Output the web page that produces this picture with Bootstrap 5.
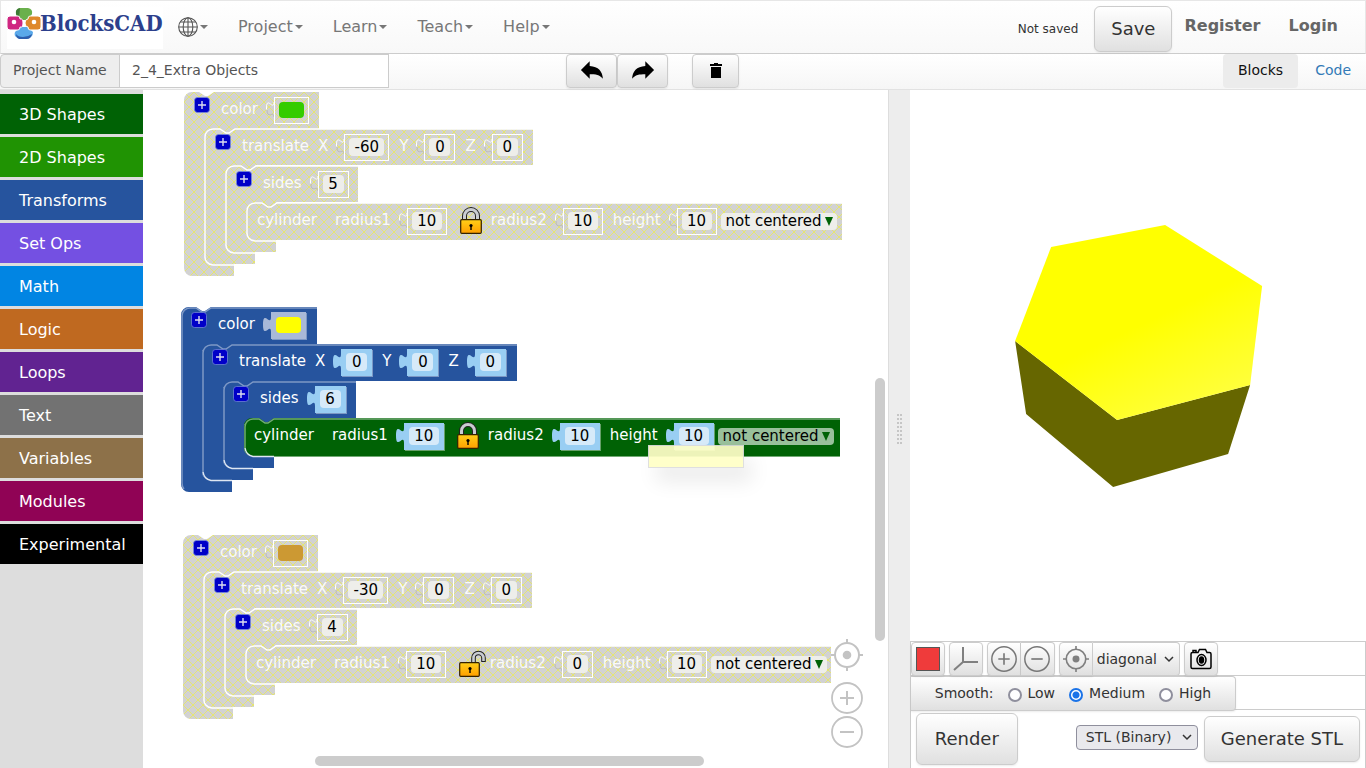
<!DOCTYPE html>
<html lang="en">
<head>
<meta charset="utf-8">
<meta name="viewport" content="width=device-width, initial-scale=1">
<title>BlocksCAD</title>
<link href="https://cdn.jsdelivr.net/npm/bootstrap@5.3.0/dist/css/bootstrap.min.css" rel="stylesheet">
<style>
body{font-family:"DejaVu Sans",sans-serif;font-size:14px;line-height:20px;color:#333}
a{text-decoration:none}
.topbar{height:54px;padding:0 27px 0 6px;border:1px solid #e7e7e7;border-bottom-color:#ccc;background:linear-gradient(#fff,#f8f8f8);flex-wrap:nowrap;justify-content:flex-start}
.brand{width:156px;height:42px;background:#fff;margin-top:2px}
.topbar .nav-link{font-size:16px;color:#777;padding:0 15px;white-space:nowrap;display:flex;align-items:center}
.topbar .dropdown-toggle::after{margin-left:2px;vertical-align:0;border-top:4px solid;border-right:4px solid transparent;border-left:4px solid transparent}
.status{font-size:12px}
.account{font-size:16px;font-weight:700;color:#666;padding-bottom:2px}
.btn-grad{--bs-btn-padding-x:0;--bs-btn-padding-y:0;border:1px solid #ccc;border-radius:4px;background:linear-gradient(#fff,#e0e0e0);color:#333;box-shadow:0 1px 2px rgba(0,0,0,.08);display:flex;align-items:center;justify-content:center}
.btn-big{font-size:18px;line-height:24px;border-radius:6px;padding:10px 16px}
.btn-render{padding:13px 18px}
.subbar{height:36px;background:linear-gradient(#fff,#f6f6f6);border-bottom:1px solid #e2e2e2}
.namegroup{width:389px;height:34px}
.namegroup .input-group-text{width:120px;font-size:14px;line-height:20px;background:#eee;color:#555;border-color:#ccc;padding:0 12px 2px;height:34px;border-radius:4px 0 0 4px}
.namegroup .form-control{font-size:14px;color:#555;border-color:#ccc;border-radius:0;padding:0 12px 2px;height:34px}
.edits{margin-left:177px}
.edit-btn{width:51px;height:34px}
.edit-del{width:47px}
.mode{gap:2px}
.mode .nav-link{height:34px;padding:6px 15px;color:#337ab7;border-radius:4px}
.mode .nav-link.active{background:#ececec;color:#111}
.toolbox{width:143px;background:#ddd;padding-top:4px;flex:none}
.toolbox a{height:40px;margin-bottom:3px;padding:9px 19px 7px;line-height:24px;font-size:16px;color:#fff;display:block}
.splitter{width:22px;background:#ededed;border-left:1px solid #ddd;flex:none}
.viewpane{width:33.4%;flex:none}
.side{border-left:1px solid #ccc}

/* block canvas */
.stack{position:absolute;width:660px;height:185px}
.stack-a{left:41px;top:2px}
.stack-b{left:38px;top:217px}
.stack-c{left:40px;top:445px}
.shape{position:absolute;left:0;top:0;overflow:visible}
.line{position:relative;height:37px;display:flex;align-items:center;padding-left:10px;font-size:15px;color:#fff;white-space:nowrap}
.line label,.line .word{display:block;line-height:18px;padding-bottom:2px}
.l1{margin-left:21px}.l2{margin-left:42px}.l3{margin-left:63px}
.l1 .word{margin-right:9px}
.l3 .word{margin-right:18px}
.more{width:16px;height:16px;align-self:flex-start;margin:5px 11px 0 0;padding:0;border:0;background:none;display:flex}
.socket{display:flex;height:27px;color:#99cef3;margin:0 10px 0 8px}
.socket svg{display:block}
.hole{background:currentColor;height:27px;padding:4px 5px;display:flex;align-items:center;box-shadow:1px 1px 0 rgba(255,255,255,.4)}
.numfield{width:21px;height:18px;border:0;border-radius:4px;padding:0;text-align:center;font-size:15px;line-height:18px;color:#000;background:#d6eaf9}
.w2{width:30px}.w3{width:35px}
.paint{color:#a8b9d8}
.swatch{width:25px;height:16px;border:0;border-radius:4px;padding:0;overflow:hidden;background:none;appearance:none;display:block}
.swatch::-webkit-color-swatch-wrapper{padding:0}
.swatch::-webkit-color-swatch{border:0}
.pick{display:flex;align-items:center;height:17px;border-radius:4px;background:#99c09b;padding:0 4px 0 5px;color:#000}
.pick select{appearance:none;border:0;background:none;padding:0;width:99px;font-size:15px;line-height:17px;color:#000}
.off .hole{background:none;border:1px solid #fff;padding:3px 4px;box-shadow:none}
.off .numfield,.off .pick{background:#eeeeea}
.off .socket{color:transparent}
.off .line{color:#fafafa}
.tip{position:absolute;left:505px;top:355px;width:96px;height:23px;background:#ffffc7;border:1px solid #ddd;opacity:.93;box-shadow:8px 14px 20px rgba(0,0,0,.08)}
.canvas-tools{position:absolute;right:25px;bottom:20px;width:32px;color:#c3c3c3}
.canvas-tools button{border:0;background:none;padding:0;display:block;color:inherit;margin-top:2px}
.canvas-tools button:first-child{margin-bottom:11px}
.scroll-v{position:absolute;right:3px;top:288px;width:10px;height:263px;border-radius:5px;background:#ccc}
.scroll-h{position:absolute;left:172px;bottom:2px;width:389px;height:10px;border-radius:5px;background:#ccc}

/* viewer controls */
.tool{width:34px;height:34px}
.viewsel{width:87px;height:34px;appearance:none;border:1px solid #ccc;border-left:0;border-radius:0 4px 4px 0;color:#333;padding:0 4px}
.chev{background-image:url("data:image/svg+xml,%3Csvg xmlns='http://www.w3.org/2000/svg' width='10' height='7'%3E%3Cpath d='M1 1L5 5 9 1' fill='none' stroke='%23333' stroke-width='1.500'/%3E%3C/svg%3E"),linear-gradient(#fff,#e0e0e0);background-repeat:no-repeat;background-position:right 5px center,0 0}
.fmt{appearance:none;width:122px;height:25px;border:1px solid #8f8f9d;border-radius:4px;color:#333;padding:0 9px;margin:0 6px 4px auto;background-color:#e9e9ed;background-position:right 5px center}
.fmt.chev{background-image:url("data:image/svg+xml,%3Csvg xmlns='http://www.w3.org/2000/svg' width='10' height='7'%3E%3Cpath d='M1 1L5 5 9 1' fill='none' stroke='%23333' stroke-width='1.500'/%3E%3C/svg%3E")}
.panel-row{height:34px;border-bottom:1px solid #ccc}
.smooth{width:325px;height:35px;justify-content:flex-start;padding:0 0 0 24px;border-left:0;border-radius:0 4px 4px 0}
.smooth span,.smooth label{padding-bottom:1px}
.smooth input{appearance:none;width:14px;height:14px;border:2px solid #8f8f9d;border-radius:50%;background:#fff;margin:3px 6px 0 14px}
.smooth input:checked{border-color:#1a73e8;background:radial-gradient(#1a73e8 0 3px,#fff 4px)}
.renderbar{height:58px;padding:0 5px}
</style>
</head>
<body class="vh-100 d-flex flex-column overflow-hidden bg-white">

<svg width="0" height="0" class="position-absolute" aria-hidden="true">
  <defs>
    <pattern id="hatch" width="10" height="10" patternUnits="userSpaceOnUse"><rect width="10" height="10" fill="#d2d2d2"/><path d="M0 0L10 10M10 0L0 10" stroke="#eeee44" stroke-width=".8" stroke-opacity=".85"/></pattern>
    <linearGradient id="gold" x2="0" y2="1"><stop stop-color="#ffcf18"/><stop offset="1" stop-color="#ff9f00"/></linearGradient>
    <linearGradient id="sun" x2=".6" y2="1"><stop offset=".6" stop-color="#ff0"/><stop offset="1" stop-color="#ffff38"/></linearGradient>
    <symbol id="plus" viewBox="0 0 16 16"><rect x=".5" y=".5" width="15" height="15" rx="3" fill="#0000c8" stroke="#7b8fd8" stroke-opacity=".7"/><path d="M8 4v8M4 8h8" stroke="#dde" stroke-width="1.400"/></symbol>
    <symbol id="tab" viewBox="0 0 8 27"><path d="M8 5c0 10-8-8-8 7.500s8-2.500 8 7.500z" fill="currentColor"/></symbol>
    <symbol id="tab-off" viewBox="0 0 8 27"><path d="M8 5c0 10-8-8-7.500 7.500" fill="none" stroke="#fff"/><path d="M1 13c0 10 7 0 7 7" fill="none" stroke="#bbb"/></symbol>
    <symbol id="lock" viewBox="0 0 30 28"><path d="M7.500 14V9a6.500 6.500 0 0 1 13 0v5" fill="none" stroke="#222" stroke-width="5"/><path d="M7.500 14V9a6.500 6.500 0 0 1 13 0v5" fill="none" stroke="#c9ccd2" stroke-width="3"/><rect x="3.700" y="12.700" width="20.600" height="13.600" rx="1" fill="url(#gold)" stroke="#332200" stroke-width="1.200"/><circle cx="14" cy="18.500" r="1.600"/><path d="M14 19v4" stroke="#000" stroke-width="1.400"/></symbol>
    <symbol id="unlock" viewBox="0 0 30 28"><path d="M18.500 13V9a5 5 0 0 1 10 0v4" transform="translate(-1 -1)" fill="none" stroke="#222" stroke-width="4.600"/><path d="M18.500 13V9a5 5 0 0 1 10 0v3" transform="translate(-1 -1)" fill="none" stroke="#c9ccd2" stroke-width="2.600"/><rect x="3.700" y="12.700" width="19.600" height="13.600" rx="1" fill="url(#gold)" stroke="#332200" stroke-width="1.200"/><circle cx="14" cy="18.500" r="1.600"/><path d="M14 19v4" stroke="#000" stroke-width="1.400"/></symbol>
    <symbol id="target" viewBox="0 0 32 32"><circle cx="16" cy="16" r="12" fill="none" stroke="currentColor" stroke-width="2"/><circle cx="16" cy="16" r="4.300" fill="currentColor"/><path d="M16 0v4M16 28v4M0 16h4M28 16h4" stroke="currentColor" stroke-width="2"/></symbol>
    <symbol id="zin" viewBox="0 0 32 32"><circle cx="16" cy="16" r="15" fill="none" stroke="currentColor" stroke-width="1.800"/><path d="M16 9v14M9 16h14" stroke="currentColor" stroke-width="2"/></symbol>
    <symbol id="zout" viewBox="0 0 32 32"><circle cx="16" cy="16" r="15" fill="none" stroke="currentColor" stroke-width="1.800"/><path d="M9 16h14" stroke="currentColor" stroke-width="2"/></symbol>
    <symbol id="down" viewBox="0 0 8 9"><path d="M0 0h8L4 9z" fill="#006205"/></symbol>
  </defs>
</svg>

<nav class="navbar topbar">
  <a class="brand flex-shrink-0 d-block" href="#" aria-label="BlocksCAD">
    <svg width="156" height="42" viewBox="0 0 156 42">
      <path d="M9 8q-1-6 4-7h8q5 1 4 6-2 2-2 6H11q0-3-2-5z" fill="#6ab04c"/>
      <path d="M9 7q-1-5 4-6l-1 10z" fill="#3d7a35"/>
      <path d="M11 20h12q0 3 3 5 0 6-6 6h-8q-6-1-4-6 3-2 3-5z" fill="#5aa9ea"/><path d="M9 27q2 3 7 3t9-3q-1 5-5 5h-8q-3-1-3-5z" fill="#2d5fae"/>
      <path d="M3 9h8q2 0 2 3 3-1 3 4t-3 4q0 3-2 3H3q-3 0-3-3v-8q0-3 3-3z" fill="#cf2681" stroke="#fff"/>
      <path d="M23 9h8q3 0 3 3v8q0 3-3 3h-8q-2 0-2-3-3 0-3-4t3-4q0-3 2-3z" fill="#df882b" stroke="#fff"/>
      <circle cx="7" cy="15" r="2.300" fill="#fff"/><circle cx="27" cy="15" r="2.300" fill="#fff"/>
      <text x="33" y="24" font-family="'DejaVu Serif Condensed','DejaVu Serif',serif" font-weight="700" font-size="22" fill="#2c3f8c">BlocksCAD</text>
    </svg>
  </a>
  <a class="nav-link dropdown-toggle" href="#" aria-label="Language">
    <svg width="20" height="20" viewBox="0 0 20 20" fill="none" stroke="#555" stroke-width="1.100"><circle cx="10" cy="10" r="9.300"/><ellipse cx="10" cy="10" rx="4.800" ry="9.300"/><path d="M10 .7v18.600M.7 10h18.600M2.500 5h15M2.500 15h15"/></svg>
  </a>
  <a class="nav-link dropdown-toggle" href="#">Project</a>
  <a class="nav-link dropdown-toggle" href="#">Learn</a>
  <a class="nav-link dropdown-toggle" href="#">Teach</a>
  <a class="nav-link dropdown-toggle" href="#">Help</a>
  <span class="status ms-auto pt-1">Not saved</span>
  <button class="btn btn-grad btn-big ms-3 mt-1" type="button">Save</button>
  <a class="account ms-2 ps-1" href="#">Register</a>
  <a class="account ms-4 ps-1" href="#">Login</a>
</nav>

<div class="subbar d-flex flex-shrink-0">
  <div class="input-group namegroup flex-nowrap">
    <label class="input-group-text" for="pname">Project Name</label>
    <input class="form-control" id="pname" value="2_4_Extra Objects">
  </div>
  <div class="d-flex edits">
    <button class="btn btn-grad edit-btn" type="button" aria-label="Undo"><svg width="24" height="19" viewBox="0 0 26 20"><path d="M1 9.500L10.500 0v5C20 5.500 24.500 11 24.800 19 21.500 14.500 17 14 10.500 14V19z"/></svg></button>
    <button class="btn btn-grad edit-btn" type="button" aria-label="Redo"><svg width="24" height="19" viewBox="0 0 26 20"><path d="M25 9.500L15.500 0v5C6 5.500 1.500 11 1.200 19 4.500 14.500 9 14 15.500 14V19z"/></svg></button>
    <button class="btn btn-grad edit-btn edit-del ms-4" type="button" aria-label="Delete"><svg width="12" height="15" viewBox="0 0 12 15"><path d="M0 1h4V0h4v1h4v2H0zM1 4h10v11H1z"/></svg></button>
  </div>
  <nav class="nav mode ms-auto">
    <a class="nav-link active" href="#">Blocks</a>
    <a class="nav-link" href="#">Code</a>
  </nav>
</div>

<main class="d-flex flex-grow-1" style="min-height:0">
  <div class="d-flex flex-grow-1">
    <nav class="toolbox" aria-label="Toolbox">
      <a href="#" style="background:#006205">3D Shapes</a>
      <a href="#" style="background:#209303">2D Shapes</a>
      <a href="#" style="background:#26549e">Transforms</a>
      <a href="#" style="background:#7450e2">Set Ops</a>
      <a href="#" style="background:#0185e3">Math</a>
      <a href="#" style="background:#bf6920">Logic</a>
      <a href="#" style="background:#612391">Loops</a>
      <a href="#" style="background:#727272">Text</a>
      <a href="#" style="background:#8d7149">Variables</a>
      <a href="#" style="background:#900355">Modules</a>
      <a href="#" style="background:#000">Experimental</a>
    </nav>

    <section class="flex-grow-1 position-relative overflow-hidden" aria-label="Workspace">
      <div class="stack stack-a off">
        <svg class="shape" width="660" height="185" fill="url(#hatch)">
          <path d="M0 8a8 8 0 0 1 8-8h7l6 4h3l6-4H135V37H45l-6 4h-3l-6-4H29a8 8 0 0 0-8 8V165a8 8 0 0 0 8 7H50V184H8a8 8 0 0 1-8-8z"/>
          <path d="M21 45a8 8 0 0 1 8-8h7l6 4h3l6-4H349V73H66l-6 5h-3l-6-4H50a8 8 0 0 0-8 8V153a8 8 0 0 0 8 7H71V172H29a8 8 0 0 1-8-8z"/>
          <path d="M42 82a8 8 0 0 1 8-8h7l6 4h3l6-4H174V110H87l-6 5h-3l-6-4H71a8 8 0 0 0-8 8V141a8 8 0 0 0 8 7H92V160H50a8 8 0 0 1-8-8z"/>
          <path d="M30 36h21l-6 5h-3zM51 73h21l-6 5h-3zM72 110h21l-6 5h-3z"/>
          <path d="M63 119a8 8 0 0 1 8-8h7l6 4h3l6-4H658V148H71a8 8 0 0 1-8-8z"/>
          <g fill="none" stroke="#fff" stroke-width="1.400"><path d="M50 173H29a8 8 0 0 1-8-9V45a8 8 0 0 1 8-8h7l6 4h3l6-4H349M71 161H50a8 8 0 0 1-8-9V82a8 8 0 0 1 8-8h7l6 4h3l6-4H174M92 149H71a8 8 0 0 1-8-9V119a8 8 0 0 1 8-8h7l6 4h3l6-4H658"/></g>
        </svg>
        <div class="line"><button class="more" type="button" aria-label="Add"><svg width="16" height="16"><use href="#plus"/></svg></button><label for="a0">color</label><span class="socket"><svg width="8" height="27"><use href="#tab-off"/></svg><span class="hole"><input class="swatch" id="a0" type="color" value="#33cc00"></span></span></div>
        <div class="line l1"><button class="more" type="button" aria-label="Add"><svg width="16" height="16"><use href="#plus"/></svg></button><span class="word">translate</span><label for="a1">X</label><span class="socket"><svg width="8" height="27"><use href="#tab-off"/></svg><span class="hole"><input class="numfield w3" id="a1" value="-60"></span></span><label for="a2">Y</label><span class="socket"><svg width="8" height="27"><use href="#tab-off"/></svg><span class="hole"><input class="numfield" id="a2" value="0"></span></span><label for="a3">Z</label><span class="socket"><svg width="8" height="27"><use href="#tab-off"/></svg><span class="hole"><input class="numfield" id="a3" value="0"></span></span></div>
        <div class="line l2"><button class="more" type="button" aria-label="Add"><svg width="16" height="16"><use href="#plus"/></svg></button><label for="a4">sides</label><span class="socket"><svg width="8" height="27"><use href="#tab-off"/></svg><span class="hole"><input class="numfield" id="a4" value="5"></span></span></div>
        <div class="line l3"><span class="word">cylinder</span><label for="a5">radius1</label><span class="socket"><svg width="8" height="27"><use href="#tab-off"/></svg><span class="hole"><input class="numfield w2" id="a5" value="10"></span></span><svg class="me-1" width="30" height="28"><use href="#lock"/></svg><label for="a6">radius2</label><span class="socket"><svg width="8" height="27"><use href="#tab-off"/></svg><span class="hole"><input class="numfield w2" id="a6" value="10"></span></span><label for="a7">height</label><span class="socket me-1"><svg width="8" height="27"><use href="#tab-off"/></svg><span class="hole"><input class="numfield w2" id="a7" value="10"></span></span><span class="pick"><select aria-label="Centering"><option>not centered</option><option>centered</option></select><svg width="8" height="9"><use href="#down"/></svg></span></div>
      </div>

      <div class="stack stack-b">
        <svg class="shape" width="660" height="185" fill="#26549e">
          <path d="M0 8a8 8 0 0 1 8-8h7l6 4h3l6-4H136V37H51v6H21V165a8 8 0 0 0 8 8H51V185H8a8 8 0 0 1-8-8z"/>
          <path d="M21 45a8 8 0 0 1 8-8h7l6 4h3l6-4H336V74H72v6H42V153a8 8 0 0 0 8 8H72V173H29a8 8 0 0 1-8-8z"/>
          <path d="M42 82a8 8 0 0 1 8-8h7l6 4h3l6-4H175V111H93v6H63V141a8 8 0 0 0 8 8H93V161H50a8 8 0 0 1-8-8z"/>
          <path fill="#006205" d="M63 119a8 8 0 0 1 8-8h7l6 4h3l6-4H659V149H71a8 8 0 0 1-8-8z"/>
          <g fill="none" stroke="#7d98c5" stroke-width="1.500"><path d="M3 182Q1 180 1 176V9a8 8 0 0 1 8-8h6l6 4h3l6-4H136M22 165V46a8 8 0 0 1 8-8h6l6 4h3l6-4H336M43 153V83a8 8 0 0 1 8-8h6l6 4h3l6-4H175"/><path stroke="#72aa74" d="M64 141V120a8 8 0 0 1 8-8h6l6 4h3l6-4H659"/><path stroke="#dfe7f3" d="M22 165q1 7 8 8.500H51M43 153q1 7 8 8.500H72M64 141q1 7 8 8.500H93"/></g>
          <path stroke="#72aa74" d="M93 149.500H659"/>
        </svg>
        <div class="line"><button class="more" type="button" aria-label="Add"><svg width="16" height="16"><use href="#plus"/></svg></button><label for="b0">color</label><span class="socket paint"><svg width="8" height="27"><use href="#tab"/></svg><span class="hole"><input class="swatch" id="b0" type="color" value="#ffff00"></span></span></div>
        <div class="line l1"><button class="more" type="button" aria-label="Add"><svg width="16" height="16"><use href="#plus"/></svg></button><span class="word">translate</span><label for="b1">X</label><span class="socket"><svg width="8" height="27"><use href="#tab"/></svg><span class="hole"><input class="numfield" id="b1" value="0"></span></span><label for="b2">Y</label><span class="socket"><svg width="8" height="27"><use href="#tab"/></svg><span class="hole"><input class="numfield" id="b2" value="0"></span></span><label for="b3">Z</label><span class="socket"><svg width="8" height="27"><use href="#tab"/></svg><span class="hole"><input class="numfield" id="b3" value="0"></span></span></div>
        <div class="line l2"><button class="more" type="button" aria-label="Add"><svg width="16" height="16"><use href="#plus"/></svg></button><label for="b4">sides</label><span class="socket"><svg width="8" height="27"><use href="#tab"/></svg><span class="hole"><input class="numfield" id="b4" value="6"></span></span></div>
        <div class="line l3"><span class="word">cylinder</span><label for="b5">radius1</label><span class="socket"><svg width="8" height="27"><use href="#tab"/></svg><span class="hole"><input class="numfield w2" id="b5" value="10"></span></span><svg class="me-1" width="30" height="28"><use href="#lock"/></svg><label for="b6">radius2</label><span class="socket"><svg width="8" height="27"><use href="#tab"/></svg><span class="hole"><input class="numfield w2" id="b6" value="10"></span></span><label for="b7">height</label><span class="socket me-1"><svg width="8" height="27"><use href="#tab"/></svg><span class="hole"><input class="numfield w2" id="b7" value="10"></span></span><span class="pick"><select aria-label="Centering"><option>not centered</option><option>centered</option></select><svg width="8" height="9"><use href="#down"/></svg></span></div>
      </div>

      <div class="stack stack-c off">
        <svg class="shape" width="660" height="185" fill="url(#hatch)">
          <path d="M0 8a8 8 0 0 1 8-8h7l6 4h3l6-4H135V37H45l-6 4h-3l-6-4H29a8 8 0 0 0-8 8V165a8 8 0 0 0 8 7H50V184H8a8 8 0 0 1-8-8z"/>
          <path d="M21 45a8 8 0 0 1 8-8h7l6 4h3l6-4H349V73H66l-6 5h-3l-6-4H50a8 8 0 0 0-8 8V153a8 8 0 0 0 8 7H71V172H29a8 8 0 0 1-8-8z"/>
          <path d="M42 82a8 8 0 0 1 8-8h7l6 4h3l6-4H174V110H87l-6 5h-3l-6-4H71a8 8 0 0 0-8 8V141a8 8 0 0 0 8 7H92V160H50a8 8 0 0 1-8-8z"/>
          <path d="M30 36h21l-6 5h-3zM51 73h21l-6 5h-3zM72 110h21l-6 5h-3z"/>
          <path d="M63 119a8 8 0 0 1 8-8h7l6 4h3l6-4H648V148H71a8 8 0 0 1-8-8z"/>
          <g fill="none" stroke="#fff" stroke-width="1.400"><path d="M50 173H29a8 8 0 0 1-8-9V45a8 8 0 0 1 8-8h7l6 4h3l6-4H349M71 161H50a8 8 0 0 1-8-9V82a8 8 0 0 1 8-8h7l6 4h3l6-4H174M92 149H71a8 8 0 0 1-8-9V119a8 8 0 0 1 8-8h7l6 4h3l6-4H648"/></g>
        </svg>
        <div class="line"><button class="more" type="button" aria-label="Add"><svg width="16" height="16"><use href="#plus"/></svg></button><label for="c0">color</label><span class="socket"><svg width="8" height="27"><use href="#tab-off"/></svg><span class="hole"><input class="swatch" id="c0" type="color" value="#cc9933"></span></span></div>
        <div class="line l1"><button class="more" type="button" aria-label="Add"><svg width="16" height="16"><use href="#plus"/></svg></button><span class="word">translate</span><label for="c1">X</label><span class="socket"><svg width="8" height="27"><use href="#tab-off"/></svg><span class="hole"><input class="numfield w3" id="c1" value="-30"></span></span><label for="c2">Y</label><span class="socket"><svg width="8" height="27"><use href="#tab-off"/></svg><span class="hole"><input class="numfield" id="c2" value="0"></span></span><label for="c3">Z</label><span class="socket"><svg width="8" height="27"><use href="#tab-off"/></svg><span class="hole"><input class="numfield" id="c3" value="0"></span></span></div>
        <div class="line l2"><button class="more" type="button" aria-label="Add"><svg width="16" height="16"><use href="#plus"/></svg></button><label for="c4">sides</label><span class="socket"><svg width="8" height="27"><use href="#tab-off"/></svg><span class="hole"><input class="numfield" id="c4" value="4"></span></span></div>
        <div class="line l3"><span class="word">cylinder</span><label for="c5">radius1</label><span class="socket"><svg width="8" height="27"><use href="#tab-off"/></svg><span class="hole"><input class="numfield w2" id="c5" value="10"></span></span><svg class="me-1" width="30" height="28"><use href="#unlock"/></svg><label for="c6">radius2</label><span class="socket"><svg width="8" height="27"><use href="#tab-off"/></svg><span class="hole"><input class="numfield" id="c6" value="0"></span></span><label for="c7">height</label><span class="socket me-1"><svg width="8" height="27"><use href="#tab-off"/></svg><span class="hole"><input class="numfield w2" id="c7" value="10"></span></span><span class="pick"><select aria-label="Centering"><option>not centered</option><option>centered</option></select><svg width="8" height="9"><use href="#down"/></svg></span></div>
      </div>

      <div class="tip"></div>
      <div class="scroll-v"></div>
      <div class="scroll-h"></div>
      <div class="canvas-tools">
        <button type="button" aria-label="Center"><svg class="d-block" width="32" height="32"><use href="#target"/></svg></button>
        <button type="button" aria-label="Zoom in"><svg class="d-block" width="32" height="32"><use href="#zin"/></svg></button>
        <button type="button" aria-label="Zoom out"><svg class="d-block" width="32" height="32"><use href="#zout"/></svg></button>
      </div>
    </section>

    <div class="splitter d-flex align-items-center justify-content-center">
      <svg width="5" height="30" fill="none" stroke="#c6c6c6" stroke-width="2" stroke-dasharray="2 2"><path d="M1 0V30M4 0V30"/></svg>
    </div>
  </div>

  <div class="viewpane d-flex flex-column">
    <div class="flex-grow-1" style="min-height:0">
      <svg class="d-block w-100 h-100" viewBox="910 90 456 551" role="img" aria-label="Rendered model">
        <path d="M1015 341L1117 420 1250 385 1228 454 1113 487 1026 414z" fill="#666600"/>
        <path d="M1051 247L1165 225 1262 286 1250 385 1117 420 1015 341z" fill="url(#sun)"/>
      </svg>
    </div>
    <div class="side border-top border-end" style="--bs-border-color:#ccc">
      <div class="panel-row d-flex">
        <button class="btn btn-grad tool" type="button" aria-label="Background colour"><svg width="24" height="24"><rect x=".5" y=".5" width="23" height="23" fill="#ef3b3b" stroke="#555"/></svg></button>
        <button class="btn btn-grad tool ms-1" type="button" aria-label="Axes"><svg width="26" height="26" viewBox="0 0 26 26" fill="none" stroke="#808080" stroke-width="2"><path d="M10 1v15h15M10 16l-9 8"/></svg></button>
        <button class="btn btn-grad tool ms-1 rounded-end-0" type="button" aria-label="Zoom in"><svg width="26" height="26" color="#777"><use href="#zin"/></svg></button>
        <button class="btn btn-grad tool rounded-start-0 border-start-0" type="button" aria-label="Zoom out"><svg width="26" height="26" color="#777"><use href="#zout"/></svg></button>
        <button class="btn btn-grad tool ms-1 rounded-end-0" type="button" aria-label="Reset view"><svg width="26" height="26" color="#808080"><use href="#target"/></svg></button>
        <select class="viewsel chev" aria-label="View"><option>diagonal</option><option>front</option></select>
        <button class="btn btn-grad tool ms-1" type="button" aria-label="Screenshot"><svg width="22" height="22" viewBox="0 0 22 22" fill="none" stroke="#000" stroke-width="1.500"><path d="M8 4.500L9.500 1.500h6L17 4.500h2.500q1.500 0 1.500 1.500V19q0 1.500-1.500 1.500h-17Q1 20.500 1 19V6q0-1.500 1.500-1.500zM3 4.500V2.500h3v2"/><ellipse cx="11.500" cy="12" rx="4.500" ry="5.500"/><ellipse cx="11.500" cy="12" rx="2" ry="3" fill="#000"/></svg></button>
      </div>
      <div class="panel-row">
        <div class="btn-grad smooth">
          <span>Smooth:</span>
          <input type="radio" name="sm" id="lo"><label for="lo">Low</label>
          <input type="radio" name="sm" id="me" checked><label for="me">Medium</label>
          <input type="radio" name="sm" id="hi"><label for="hi">High</label>
        </div>
      </div>
      <div class="renderbar d-flex align-items-center">
        <button class="btn btn-grad btn-big btn-render" type="button">Render</button>
        <select class="fmt chev" aria-label="Format"><option>STL (Binary)</option><option>OBJ</option></select>
        <button class="btn btn-grad btn-big" type="button">Generate STL</button>
      </div>
    </div>
  </div>
</main>
<script src="https://cdn.jsdelivr.net/npm/bootstrap@5.3.0/dist/js/bootstrap.bundle.min.js"></script>
</body>
</html>
